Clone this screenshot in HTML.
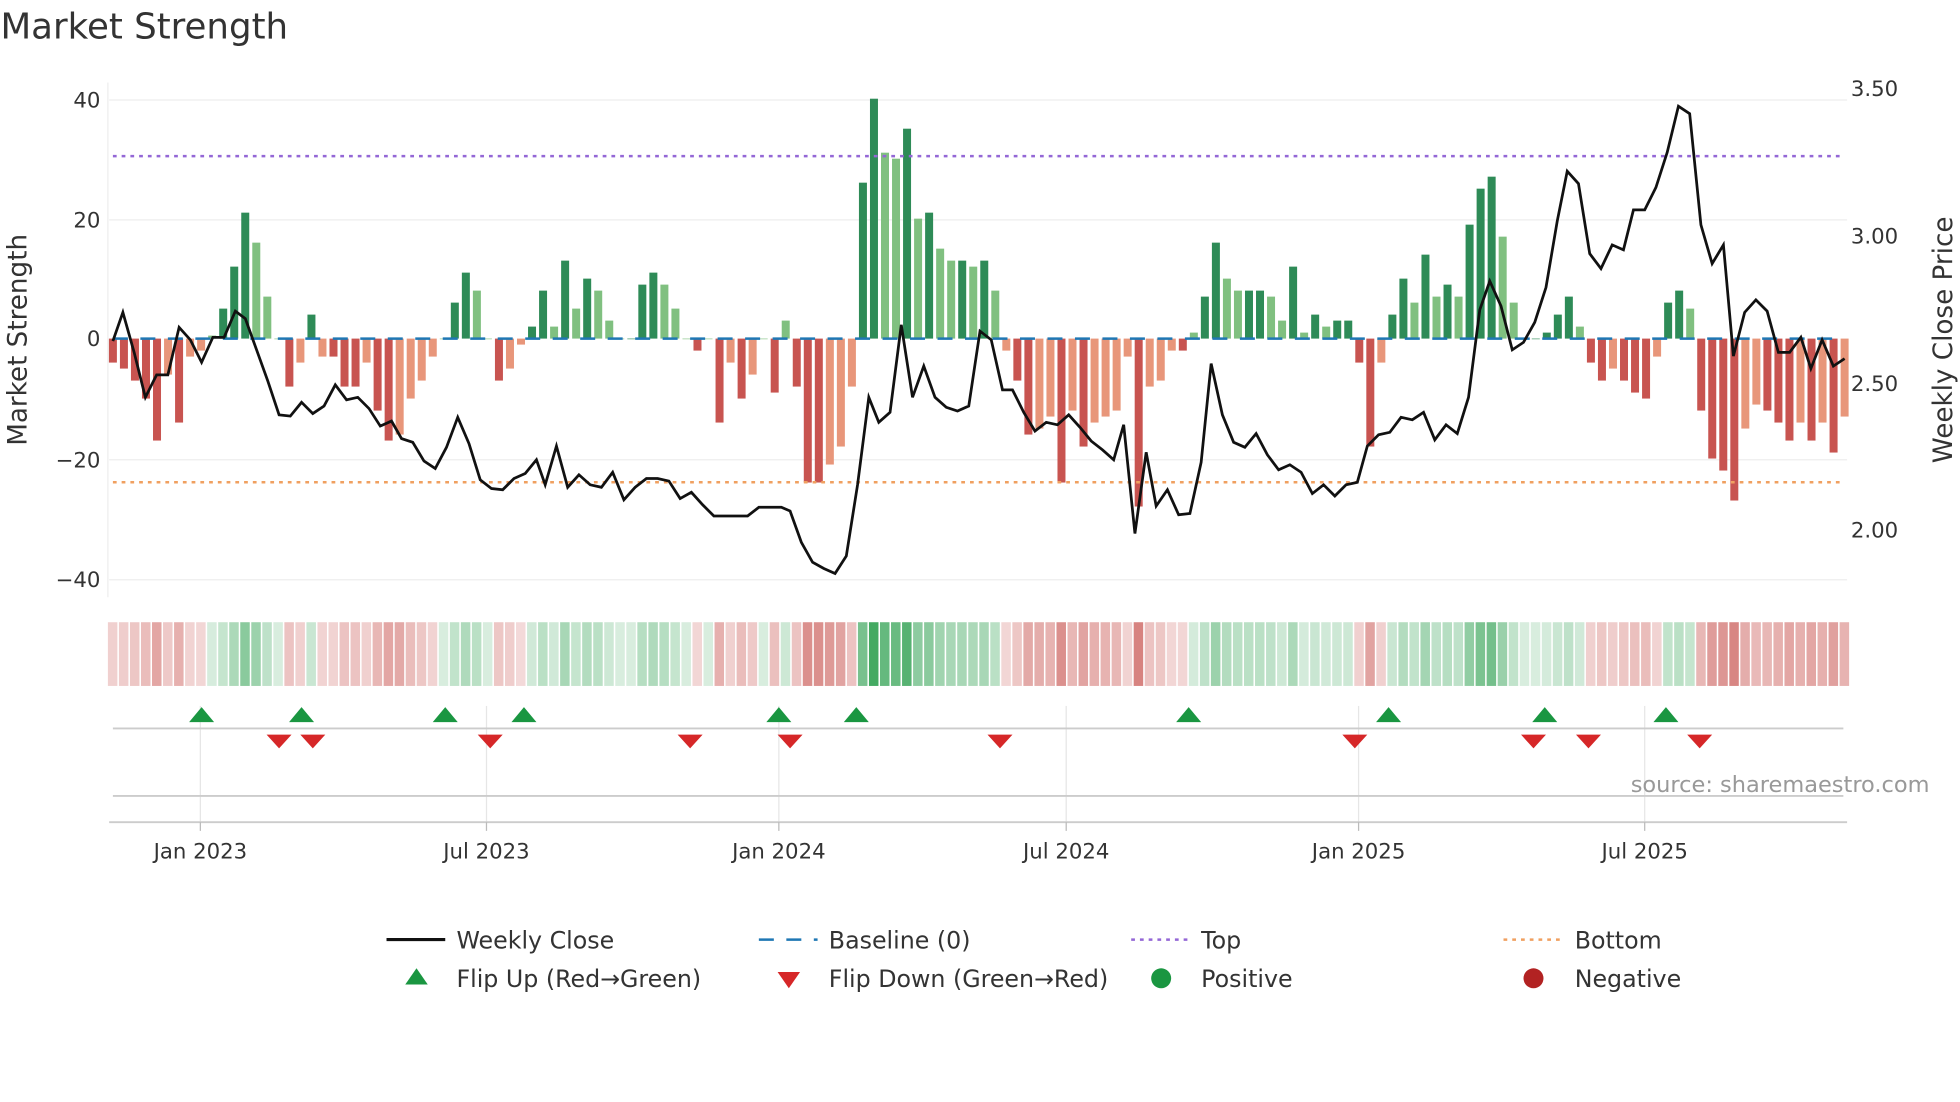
<!DOCTYPE html>
<html><head><meta charset="utf-8"><style>
html,body{margin:0;padding:0;background:#fff;}
svg{display:block;font-family:"DejaVu Sans","Liberation Sans",sans-serif;}
</style></head><body>
<svg id="s" width="1960" height="1102" viewBox="0 0 1568 882" xmlns="http://www.w3.org/2000/svg">
<text x="0" y="31" font-size="28.5" fill="#333">Market Strength</text>
<g stroke="#eee" stroke-width="1">
<line x1="87" y1="80" x2="1478" y2="80"/><line x1="87" y1="176" x2="1478" y2="176"/>
<line x1="87" y1="368" x2="1478" y2="368"/><line x1="87" y1="464" x2="1478" y2="464"/>
</g>
<line x1="86" y1="66" x2="86" y2="478" stroke="#eee"/>
<g font-size="17" fill="#333" text-anchor="end">
<text x="80" y="86">40</text><text x="80" y="182">20</text><text x="80" y="277">0</text>
<text x="80" y="374">−20</text><text x="80" y="470">−40</text>
</g>
<g font-size="17" fill="#333">
<text x="1481" y="77">3.50</text><text x="1481" y="195">3.00</text><text x="1481" y="313">2.50</text><text x="1481" y="430">2.00</text>
</g>
<text transform="translate(21,272) rotate(-90)" font-size="21" fill="#333" text-anchor="middle">Market Strength</text>
<text transform="translate(1562,272) rotate(-90)" font-size="21" fill="#333" text-anchor="middle">Weekly Close Price</text>
<g id="bars"></g>
<line x1="90" y1="271" x2="1476" y2="271" stroke="#1f77b4" stroke-width="2" stroke-dasharray="12,10"/>
<line x1="90" y1="125" x2="1476" y2="125" stroke="#9467d6" stroke-width="2" stroke-dasharray="3,4"/>
<line x1="90" y1="386" x2="1476" y2="386" stroke="#f0a060" stroke-width="2" stroke-dasharray="3,4"/>
<polyline id="price" fill="none" stroke="#111" stroke-width="2.2"/>
<g id="heat"></g>
<g stroke="#e6e6e6"><line x1="160" y1="565" x2="160" y2="658"/><line x1="389" y1="565" x2="389" y2="658"/><line x1="623" y1="565" x2="623" y2="658"/><line x1="853" y1="565" x2="853" y2="658"/><line x1="1087" y1="565" x2="1087" y2="658"/><line x1="1316" y1="565" x2="1316" y2="658"/></g>
<line x1="90" y1="583" x2="1475" y2="583" stroke="#ccc" stroke-width="1.5"/>
<line x1="90" y1="637" x2="1475" y2="637" stroke="#ccc" stroke-width="1.5"/>
<line x1="87" y1="658" x2="1478" y2="658" stroke="#ccc" stroke-width="1.5"/>
<g id="mk"></g>
<text x="1544" y="634" font-size="18" fill="#999" text-anchor="end">source: sharemaestro.com</text>
<g stroke="#bbb"><line x1="160" y1="658" x2="160" y2="665"/><line x1="389" y1="658" x2="389" y2="665"/><line x1="623" y1="658" x2="623" y2="665"/><line x1="853" y1="658" x2="853" y2="665"/><line x1="1087" y1="658" x2="1087" y2="665"/><line x1="1316" y1="658" x2="1316" y2="665"/></g>
<g font-size="17" fill="#333" text-anchor="middle">
<text x="160" y="687">Jan 2023</text><text x="389" y="687">Jul 2023</text><text x="623" y="687">Jan 2024</text>
<text x="853" y="687">Jul 2024</text><text x="1087" y="687">Jan 2025</text><text x="1316" y="687">Jul 2025</text>
</g>
<g font-size="19" fill="#333">
<line x1="309" y1="752" x2="356" y2="752" stroke="#111" stroke-width="2.5"/><text x="365" y="759">Weekly Close</text>
<line x1="607" y1="752" x2="654" y2="752" stroke="#1f77b4" stroke-width="2" stroke-dasharray="12,10"/><text x="663" y="759">Baseline (0)</text>
<line x1="905" y1="752" x2="950" y2="752" stroke="#9467d6" stroke-width="2" stroke-dasharray="3,4"/><text x="961" y="759">Top</text>
<line x1="1203" y1="752" x2="1248" y2="752" stroke="#f0a060" stroke-width="2" stroke-dasharray="3,4"/><text x="1260" y="759">Bottom</text>
<polygon points="324,788 342,788 333,775" fill="#1a9641"/><text x="365" y="790">Flip Up (Red→Green)</text>
<polygon points="622,778 640,778 631,791" fill="#d62728"/><text x="663" y="790">Flip Down (Green→Red)</text>
<circle cx="929" cy="783" r="8" fill="#1a9641"/><text x="961" y="790">Positive</text>
<circle cx="1227" cy="783" r="8" fill="#b22222"/><text x="1260" y="790">Negative</text>
</g>
</svg>
<script>
var v=[-4,-5,-7,-10,-17,-6,-14,-3,-2,0.5,5,12,21,16,7,0,-8,-4,4,-3,-3,-8,-8,-4,-12,-17,-16,-10,-7,-3,0,6,11,8,0,-7,-5,-1,2,8,2,13,5,10,8,3,0,0,9,11,9,5,0,-2,0,-14,-4,-10,-6,0,-9,3,-8,-24,-24,-21,-18,-8,26,40,31,30,35,20,21,15,13,13,12,13,8,-2,-7,-16,-15,-13,-24,-12,-18,-14,-13,-12,-3,-28,-8,-7,-2,-2,1,7,16,10,8,8,8,7,3,12,1,4,2,3,3,-4,-18,-4,4,10,6,14,7,9,7,19,25,27,17,6,0,0,1,4,7,2,-4,-7,-5,-7,-9,-10,-3,6,8,5,-12,-20,-22,-27,-15,-11,-12,-14,-17,-14,-17,-14,-19,-13];
var NS="http://www.w3.org/2000/svg",b=document.getElementById('bars'),h=document.getElementById('heat');
var step=(1476-90)/(v.length-1);
function r(g,x,y,w,hh,f,o){var e=document.createElementNS(NS,'rect');e.setAttribute('x',x);e.setAttribute('y',y);e.setAttribute('width',w);e.setAttribute('height',hh);e.setAttribute('fill',f);if(o!=null)e.setAttribute('fill-opacity',o);g.appendChild(e);}
for(var i=0;i<v.length;i++){var x=90+i*step,val=v[i],p=i?Math.abs(v[i-1]):0,dark=Math.abs(val)>=p;
var col=val>=0?(dark?'#2e8b57':'#80c080'):(dark?'#c85450':'#e8967a');
var hp=Math.abs(val)*4.8;r(b,x-3.2,val>=0?271-hp:271,6.4,Math.max(hp,0.5),col);
var o=0.2+Math.min(Math.abs(val)/40,1)*0.75;r(h,x-4,498,7.6,51,val>=0?'#3aa55a':'#c85450',o);}
var P="90,273 98,250 107,282 116,318 125,300 134,300 143,262 152,272 161,290 170,270 179,270 188,249 196,255 205,280 214,305 223,332 232,333 241,322 250,331 259,325 268,308 277,320 286,318 295,327 304,341 313,337 321,351 330,354 339,369 348,375 357,358 366,334 375,355 384,384 393,391 402,392 411,383 420,379 429,368 436,388 445,357 454,390 463,380 472,388 481,390 490,378 499,400 508,390 517,383 526,383 535,385 544,399 553,394 562,404 571,413 580,413 589,413 598,413 607,406 616,406 625,406 632,409 641,434 650,450 659,455 668,459 677,445 686,388 695,318 703,338 712,330 721,260 730,318 739,293 748,318 757,326 766,329 775,325 784,265 793,272 802,312 810,312 819,330 828,345 837,338 846,340 855,332 864,342 873,353 882,360 891,368 899,340 908,427 917,362 925,405 934,392 943,412 952,411 961,370 969,291 978,332 987,354 996,358 1005,347 1014,364 1023,376 1032,372 1041,378 1050,395 1059,388 1068,397 1077,388 1086,386 1094,357 1103,348 1112,346 1121,334 1130,336 1139,330 1148,352 1157,340 1166,347 1175,318 1184,248 1192,225 1201,245 1210,280 1219,274 1228,258 1237,230 1246,177 1254,137 1263,147 1272,203 1281,215 1290,196 1299,200 1307,168 1316,168 1325,150 1334,122 1343,85 1352,91 1361,180 1370,211 1379,196 1387,285 1396,250 1405,240 1414,249 1423,282 1432,282 1441,270 1449,295 1458,272 1467,293 1476,287";
document.getElementById('price').setAttribute('points',P);
var mk=document.getElementById('mk');
[161,241,356,419,623,685,951,1111,1236,1333].forEach(function(x){var e=document.createElementNS(NS,'polygon');e.setAttribute('points',(x-10)+',578 '+(x+10)+',578 '+x+',566');e.setAttribute('fill','#1a9641');mk.appendChild(e);});
[223,250,392,552,632,800,1084,1227,1271,1360].forEach(function(x){var e=document.createElementNS(NS,'polygon');e.setAttribute('points',(x-10)+',588 '+(x+10)+',588 '+x+',599');e.setAttribute('fill','#d62728');mk.appendChild(e);});
</script>
</body></html>
